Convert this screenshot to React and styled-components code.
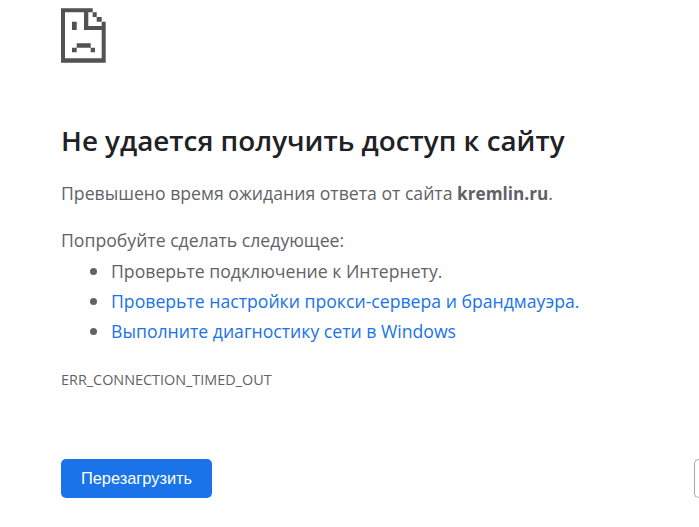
import React from "react";
import styled, { createGlobalStyle } from "styled-components";

const GlobalStyle = createGlobalStyle`
	html, body {
		margin: 0;
		height: 100%;
		background: #fff;
		overflow: hidden;
	}
`;

const SadPage = () => (
	<PageIcon viewBox="0 -0.3 45 55">
		<path
			fill="#525252"
			d="M0 0h31.7v4h-31.7zM0 4h4v50.4h-4zM4 50h40.7v4.4h-40.7zM40.7 13.4h4v36.6h-4zM23 4h4.3v13.7h-4.3zM23 17.7h17.7v4h-17.7zM31.7 4h4v4.7h-4zM35.7 8.7h5v4.7h-5zM11 13.4h4.7v8.3h-4.7zM15.7 35h14v4.4h-14zM11 39.4h4.7v4.6h-4.7zM29.7 39.4h4.3v4.6h-4.3z"
		/>
	</PageIcon>
);

const App = () => {
	return (
		<Page>
			<GlobalStyle />
			<SadPage />
			<Title>Не удается получить доступ к сайту</Title>
			<Summary>
				Превышено время ожидания ответа от сайта <b>kremlin.ru</b>.
			</Summary>
			<Hint>Попробуйте сделать следующее:</Hint>
			<Suggestions>
				<Suggestion>Проверьте подключение к Интернету.</Suggestion>
				<Suggestion>
					<TextLink href="#">Проверьте настройки прокси-сервера и брандмауэра.</TextLink>
				</Suggestion>
				<Suggestion>
					<TextLink href="#">Выполните диагностику сети в Windows</TextLink>
				</Suggestion>
			</Suggestions>
			<ErrorCode>ERR_CONNECTION_TIMED_OUT</ErrorCode>
			<Buttons>
				<ReloadButton>Перезагрузить</ReloadButton>
				<DetailsButton />
			</Buttons>
		</Page>
	);
};

export default App;

const Page = styled.div`
	padding: 8px 0 0 61px;
	font-family: "Open Sans", "Noto Sans", sans-serif;
	color: #5f6368;
	font-size: 17.65px;
`;

const PageIcon = styled.svg`
	display: block;
	width: 45px;
	height: 55px;
`;

const Title = styled.h1`
	margin: 59px 0 0;
	font-size: 27.8px;
	line-height: 36px;
	font-weight: 600;
	color: #202124;
`;

const Summary = styled.p`
	margin: 20px 0 0;
	line-height: 30px;

	b {
		font-size: 17.2px;
		font-weight: 700;
	}
`;

const Hint = styled.p`
	margin: 16px 0 0;
	line-height: 30px;
`;

const Suggestions = styled.ul`
	margin: 1px 0 0;
	padding: 0 0 0 29px;
	list-style: none;
	line-height: 30px;
`;

const Suggestion = styled.li`
	display: flex;
	align-items: center;
	gap: 14px;

	&::before {
		content: "";
		width: 7px;
		height: 7px;
		border-radius: 50%;
		background: #5f6368;
	}
`;

const TextLink = styled.a`
	color: #1a73e8;
	text-decoration: none;
`;

const ErrorCode = styled.div`
	margin-top: 25px;
	font-size: 14.4px;
	line-height: 18px;
`;

const Buttons = styled.div`
	display: flex;
	justify-content: space-between;
	margin-top: 70px;
	width: 638px;
`;

const ReloadButton = styled.button`
	width: 151px;
	height: 39px;
	padding: 0;
	border: 0;
	border-radius: 5px;
	background: #1a73e8;
	color: #fff;
	font-family: "Liberation Sans", Arial, sans-serif;
	font-size: 16.4px;
`;

const DetailsButton = styled.button`
	width: 5px;
	height: 39px;
	padding: 0;
	background: #fff;
	border: 1px solid #a8a8a8;
	border-right: 0;
	border-radius: 5px 0 0 5px;
`;
